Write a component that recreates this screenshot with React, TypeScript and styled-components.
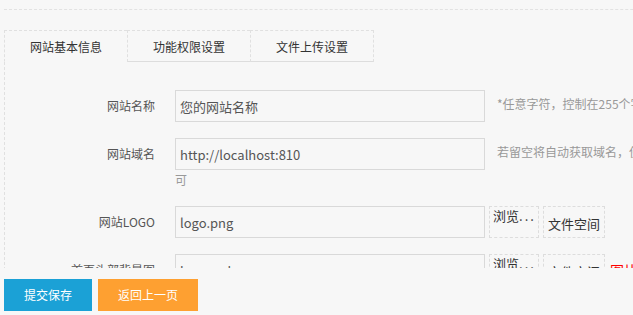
import * as React from 'react';
import styled, { createGlobalStyle } from 'styled-components';

const GlobalStyle = createGlobalStyle`
  html, body {
    margin: 0;
    padding: 0;
    background: #f7f7f7;
    overflow: hidden;
  }
  body {
    font-family: "Noto Sans CJK SC", "Microsoft YaHei", sans-serif;
    font-size: 12px;
    color: #333;
  }
`;

const Page = styled.div`
  padding: 0 0 0 4px;
  width: 1000px;
`;

const TopRule = styled.div`
  height: 9px;
  border-bottom: 1px dashed #e2e2e2;
`;

const TabBar = styled.div`
  display: flex;
  margin-top: 20px;
`;

const Tab = styled.div<{ $active?: boolean; $last?: boolean }>`
  box-sizing: border-box;
  width: ${p => (p.$last ? '124px' : '123px')};
  height: 32px;
  line-height: 31px;
  text-align: center;
  font-size: 12px;
  color: #333;
  border-top: 1px dashed #e0e0e0;
  border-left: 1px dashed #e0e0e0;
  border-right: ${p => (p.$last ? '1px dashed #e0e0e0' : '0')};
  border-bottom: 1px solid ${p => (p.$active ? 'transparent' : '#ddd')};
`;

const Panel = styled.div`
  border-left: 1px dashed #e0e0e0;
  padding-top: 28px;
  padding-bottom: 80px;
`;

const Row = styled.div`
  display: grid;
  grid-template-columns: 150px 686px;
  column-gap: 20px;
  margin-bottom: 16px;
`;

const Label = styled.div`
  text-align: right;
  line-height: 32px;
  font-size: 12px;
  color: #555;
  white-space: nowrap;
`;

const Field = styled.div`
  font-size: 12px;
  line-height: 20px;
  color: #999;
`;

const TextInput = styled.input`
  box-sizing: border-box;
  display: inline-block;
  vertical-align: middle;
  width: 310px;
  height: 32px;
  margin: 0 4px 0 0;
  padding: 0 4px;
  border: 1px solid #d9d9d9;
  background: transparent;
  font-family: inherit;
  font-size: 13px;
  color: #555;
  outline: none;
`;

const Hint = styled.span`
  padding-left: 8px;
`;

const BrowseButton = styled.span`
  box-sizing: border-box;
  display: inline-block;
  vertical-align: middle;
  width: 50px;
  height: 32px;
  margin-right: 4px;
  padding: 1px 3px;
  border: 1px dashed #ddd;
  font-size: 13px;
  line-height: 16px;
  color: #333;
  white-space: nowrap;
  overflow: hidden;
`;

const Dots = styled.span`
  letter-spacing: 2px;
`;

const SpaceButton = styled.span`
  box-sizing: border-box;
  display: inline-block;
  vertical-align: middle;
  width: 62px;
  height: 32px;
  padding-top: 3px;
  border: 1px dashed #ddd;
  font-size: 13px;
  line-height: 28px;
  text-align: center;
  color: #333;
`;

const RedNote = styled.span`
  margin-left: 5px;
  font-size: 14px;
  color: #f00;
  vertical-align: middle;
`;

const BottomBar = styled.div`
  position: fixed;
  left: 0;
  right: 0;
  bottom: 0;
  height: 47px;
  box-sizing: border-box;
  padding: 11px 4px 0;
  display: flex;
  align-items: flex-start;
  gap: 6px;
  background: #f7f7f7;
  z-index: 10;
`;

const ActionButton = styled.button<{ $tone: 'blue' | 'orange' }>`
  height: 32px;
  padding: 0 20px;
  border: 0;
  border-radius: 0;
  background: ${p => (p.$tone === 'blue' ? '#1ba1d6' : '#fea031')};
  color: #fff;
  font-family: inherit;
  font-size: 12px;
  line-height: 32px;
  cursor: pointer;
`;

const tabs = ['网站基本信息', '功能权限设置', '文件上传设置'];

function UploadField({ value, note }: { value: string; note?: string }) {
  return (
    <Field>
      <TextInput readOnly defaultValue={value} />
      <BrowseButton>浏览<Dots>...</Dots></BrowseButton>
      <SpaceButton>文件空间</SpaceButton>
      {note && <RedNote>{note}</RedNote>}
    </Field>
  );
}

export default function App() {
  return (
    <>
      <GlobalStyle />
      <Page>
        <TopRule />
        <TabBar>
          {tabs.map((t, i) => (
            <Tab key={t} $active={i === 0} $last={i === tabs.length - 1}>
              {t}
            </Tab>
          ))}
        </TabBar>
        <Panel>
          <Row>
            <Label>网站名称</Label>
            <Field>
              <TextInput readOnly defaultValue="您的网站名称" />
              <Hint>*任意字符，控制在255个字符以内</Hint>
            </Field>
          </Row>
          <Row>
            <Label>网站域名</Label>
            <Field>
              <TextInput readOnly defaultValue="http://localhost:810" />
              <Hint>若留空将自动获取域名，使用绑定域名请填写完整地址，否则留空即可</Hint>
            </Field>
          </Row>
          <Row>
            <Label>网站LOGO</Label>
            <UploadField value="logo.png" />
          </Row>
          <Row>
            <Label>首页头部背景图</Label>
            <UploadField value="banner-bg.png" note="图片尺寸：1920*500" />
          </Row>
          <Row>
            <Label>网站关键字</Label>
            <Field>
              <TextInput readOnly defaultValue="" />
            </Field>
          </Row>
        </Panel>
      </Page>
      <BottomBar>
        <ActionButton $tone="blue">提交保存</ActionButton>
        <ActionButton $tone="orange">返回上一页</ActionButton>
      </BottomBar>
    </>
  );
}
